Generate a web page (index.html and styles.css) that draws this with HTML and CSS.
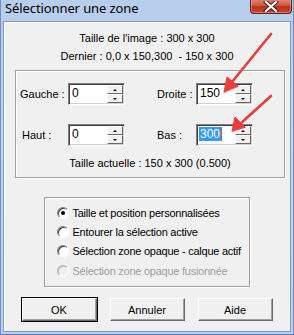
FILE: index.html
```html
<!DOCTYPE html>
<html lang="fr">
<head>
<meta charset="utf-8">
<title>Sélectionner une zone</title>
<link rel="stylesheet" href="styles.css">
</head>
<body>
<div class="window">
  <div class="titlebar">
    <span class="title">Sélectionner une zone</span>
    <div class="close">
      <svg width="16" height="11" viewBox="0 0 16 11">
        <path d="M3 1 L13 10 M13 1 L3 10" stroke="#3a2020" stroke-width="4" stroke-linecap="square"/>
        <path d="M3 1 L13 10 M13 1 L3 10" stroke="#ffffff" stroke-width="2.2" stroke-linecap="square"/>
      </svg>
    </div>
  </div>
  <div class="body">
    <p class="info first">Taille de l'image : 300 x 300</p>
    <p class="info">Dernier : 0,0 x 150,300 &nbsp;- 150 x 300</p>

    <div class="group">
      <div class="grid">
        <label class="lbl">Gauche :</label>
        <div class="spin"><span class="val">0</span><span class="btns"><span class="up"></span><span class="dn"></span></span></div>
        <label class="lbl">Droite :</label>
        <div class="spin"><span class="val">150</span><span class="btns"><span class="up"></span><span class="dn"></span></span></div>
        <label class="lbl ind">Haut :</label>
        <div class="spin"><span class="val">0</span><span class="btns"><span class="up"></span><span class="dn"></span></span></div>
        <label class="lbl">Bas :</label>
        <div class="spin"><span class="val"><span class="sel">300</span></span><span class="btns"><span class="up"></span><span class="dn"></span></span></div>
      </div>
      <p class="current">Taille actuelle : 150 x 300 (0.500)</p>
    </div>

    <div class="radios">
      <div class="radio"><span class="dot on"></span><span>Taille et position personnalisées</span></div>
      <div class="radio"><span class="dot"></span><span>Entourer la sélection active</span></div>
      <div class="radio"><span class="dot"></span><span>Sélection zone opaque - calque actif</span></div>
      <div class="radio disabled"><span class="dot"></span><span>Sélection zone opaque fusionnée</span></div>
    </div>

    <div class="buttons">
      <button class="btn default">OK</button>
      <button class="btn">Annuler</button>
      <button class="btn">Aide</button>
    </div>
  </div>

  <svg class="arrows" width="294" height="335" viewBox="0 0 294 335">
    <g stroke="#ee3b3b" stroke-width="2.6" stroke-linecap="round" fill="#ee3b3b">
      <line x1="271" y1="34" x2="232" y2="82"/>
      <polygon points="224,92 227,77 238,86" stroke-width="1" stroke-linejoin="round"/>
      <line x1="271" y1="96" x2="240" y2="124"/>
      <polygon points="232,131 235,117 245,127" stroke-width="1" stroke-linejoin="round"/>
    </g>
  </svg>
</div>
</body>
</html>
```
FILE: styles.css
```css
* { box-sizing: border-box; }
html, body { margin: 0; padding: 0; }
body {
  width: 294px;
  height: 335px;
  overflow: hidden;
  font-family: "Liberation Sans", Arial, sans-serif;
  font-size: 11px;
  color: #000;
}
.window {
  position: relative;
  width: 294px;
  height: 335px;
  background: linear-gradient(180deg, #b7cdec 0%, #c3d6f0 40%, #bcd0ee 100%);
  border-left: 1px solid #6e8fc4;
  border-right: 1px solid #6e8fc4;
  border-bottom: 1px solid #5a7ebd;
  display: flex;
  flex-direction: column;
}
.titlebar {
  height: 20px;
  display: flex;
  align-items: flex-start;
  justify-content: space-between;
  padding-left: 4px;
  padding-right: 1px;
}
.title {
  font-family: "Noto Sans", "Open Sans", sans-serif;
  font-size: 13px;
  line-height: 17px;
  color: #000;
  letter-spacing: -0.1px;
}
.close {
  width: 42px;
  height: 15px;
  flex: none;
  margin-top: -1px;
  border: 1px solid #5e2019;
  border-top: none;
  border-radius: 0 0 4px 4px;
  background: linear-gradient(180deg, #dc8a74 0%, #cf5a42 45%, #b8321a 55%, #c9482e 100%);
  display: flex;
  align-items: center;
  justify-content: center;
  box-shadow: inset 0 0 0 1px rgba(255,255,255,0.3);
}
.body {
  margin: 1px 2px 2px 2px;
  flex: 1;
  background: #f0f0f0;
  border: 1px solid #8497b5;
  box-shadow: inset 1px 1px 0 #ffffff;
  display: flex;
  flex-direction: column;
  align-items: center;
}
.info {
  margin: 0;
  line-height: 18px;
  text-align: center;
  white-space: nowrap;
}
.info.first { margin-top: 7px; }

.group {
  width: 270px;
  margin-top: 5px;
  margin-left: 6px;
  height: 108px;
  border: 1px solid #a0a0a0;
  box-shadow: 1px 1px 0 #ffffff, inset 1px 1px 0 #ffffff;
  padding: 12px 0 0 4px;
}
.grid {
  display: grid;
  grid-template-columns: 48px 89px 39px 57px;
  grid-template-rows: 22px 22px;
  row-gap: 19px;
  align-items: center;
}
.lbl { line-height: 14px; white-space: nowrap; }
.lbl.ind { padding-left: 2px; }
.spin {
  width: 57px;
  height: 22px;
  display: flex;
  border-top: 1px solid #808080;
  border-left: 1px solid #808080;
  border-right: 1px solid #ffffff;
  border-bottom: 1px solid #ffffff;
  background: #fff;
  box-shadow: inset 1px 1px 0 #404040, inset -1px -1px 0 #d4d0c8;
}
.val {
  flex: 1;
  padding: 2px 0 0 3px;
  font-size: 12px;
  line-height: 15px;
}
.sel {
  background: #3399ff;
  color: #fff;
  padding: 0 1px;
  margin-left: -1px;
  border-right: 1px solid #c0602a;
}
.btns {
  width: 16px;
  display: flex;
  flex-direction: column;
  margin: 1px 1px 1px 0;
}
.btns span {
  flex: 1;
  background: #f0f0f0;
  border-top: 1px solid #ffffff;
  border-left: 1px solid #ffffff;
  border-right: 1px solid #696969;
  border-bottom: 1px solid #696969;
  position: relative;
}
.btns span::after {
  content: "";
  position: absolute;
  left: 5px;
  width: 0;
  height: 0;
  border-left: 2px solid transparent;
  border-right: 2px solid transparent;
}
.btns .up::after { top: 3px; border-bottom: 2px solid #000; }
.btns .dn::after { top: 3px; border-top: 2px solid #000; }

.current {
  margin: 10px 0 0 0;
  text-align: center;
  line-height: 14px;
  padding-right: 4px;
  white-space: nowrap;
}

.radios {
  width: 206px;
  height: 90px;
  margin-top: 19px;
  margin-left: -1px;
  border: 1px solid #a0a0a0;
  box-shadow: 1px 1px 0 #ffffff, inset 1px 1px 0 #ffffff;
  padding: 5px 0 0 12px;
}
.radio {
  display: flex;
  align-items: center;
  height: 19.4px;
  gap: 4px;
  white-space: nowrap;
  letter-spacing: -0.25px;
}
.dot {
  width: 12px;
  height: 12px;
  border-radius: 50%;
  background: #ffffff;
  border: 1px solid;
  border-color: #808080 #ffffff #ffffff #808080;
  box-shadow: inset 1px 1px 0 #404040;
  position: relative;
  flex: none;
}
.dot.on::after {
  content: "";
  position: absolute;
  left: 3px;
  top: 3px;
  width: 4px;
  height: 4px;
  border-radius: 50%;
  background: #000;
}
.radio.disabled { color: #a0a0a0; }
.radio.disabled .dot {
  background: #f0f0f0;
  border-color: #b0b0b0 #ffffff #ffffff #b0b0b0;
  box-shadow: inset 1px 1px 0 #c8c8c8;
}

.buttons {
  display: flex;
  gap: 13px;
  margin-top: 11px;
  margin-left: 0;
}
.btn {
  width: 75px;
  height: 23px;
  font-family: "Liberation Sans", Arial, sans-serif;
  font-size: 11px;
  color: #000;
  background: #f0f0f0;
  border: 1px solid;
  border-color: #ffffff #696969 #696969 #ffffff;
  box-shadow: inset -1px -1px 0 #a0a0a0;
  padding: 0;
  margin: 0;
}
.btn.default {
  outline: 1px solid #000;
  outline-offset: 0;
}

.arrows {
  position: absolute;
  left: -1px;
  top: 0;
  pointer-events: none;
}
```
